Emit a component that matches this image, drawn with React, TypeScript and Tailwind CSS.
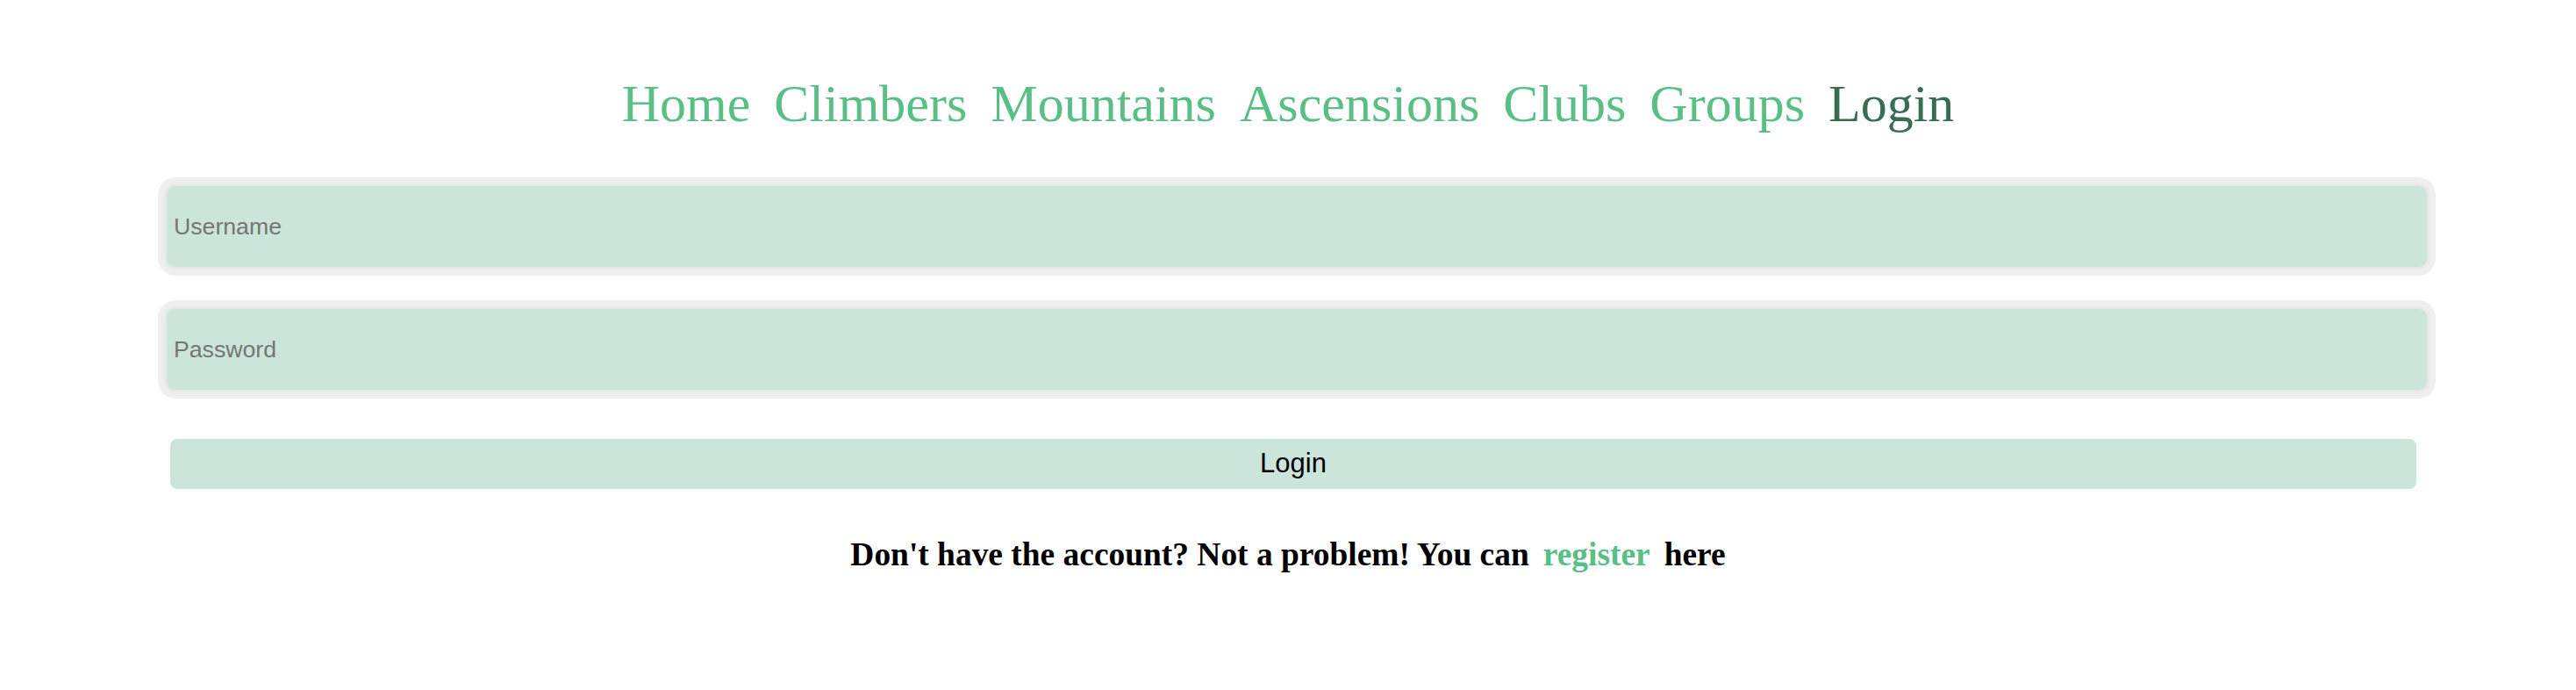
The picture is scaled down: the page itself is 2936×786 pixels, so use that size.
import React from "react";

const serif = { fontFamily: '"Liberation Serif", "Times New Roman", serif' };
const sans = { fontFamily: '"Liberation Sans", Arial, Helvetica, sans-serif' };

export default function App() {
  const links = ["Home", "Climbers", "Mountains", "Ascensions", "Clubs", "Groups"];
  return (
    <div className="min-h-[786px] w-full bg-white">
      <nav
        className="flex justify-center gap-[27px] pt-[88px] text-[60px] leading-none"
        style={serif}
      >
        {links.map((l) => (
          <a key={l} href="#" className="text-[#5abe87] no-underline">
            {l}
          </a>
        ))}
        <a href="#" className="text-[#386c53] no-underline">
          Login
        </a>
      </nav>

      <form className="mt-[54px] flex flex-col" onSubmit={(e) => e.preventDefault()}>
        <div className="ml-[180px] mr-[160px] rounded-[20px] bg-[#efefef] p-[10px]">
          <input
            type="text"
            placeholder="Username"
            className="block h-[92px] w-full rounded-[10px] bg-[#cce5db] pl-[8px] text-[26.67px] text-black shadow-[0_0_4px_2px_rgba(0,0,0,0.05)] outline-none placeholder:text-[#757575]"
            style={sans}
          />
        </div>
        <div className="mt-[28px] ml-[180px] mr-[160px] rounded-[20px] bg-[#efefef] p-[10px]">
          <input
            type="password"
            placeholder="Password"
            className="block h-[92px] w-full rounded-[10px] bg-[#cce5db] pl-[8px] text-[26.67px] text-black shadow-[0_0_4px_2px_rgba(0,0,0,0.05)] outline-none placeholder:text-[#757575]"
            style={sans}
          />
        </div>
        <button
          type="submit"
          className="mt-[46px] ml-[194px] mr-[182px] h-[57px] rounded-[8px] bg-[#cce5db] text-[31px] text-black"
          style={sans}
        >
          Login
        </button>
      </form>

      <div
        className="mt-[56px] flex justify-center gap-[16px] text-[37.44px] font-bold leading-none text-black"
        style={serif}
      >
        <span>Don't have the account? Not a problem! You can</span>
        <a href="#" className="text-[#5abe87] no-underline">
          register
        </a>
        <span>here</span>
      </div>
    </div>
  );
}
